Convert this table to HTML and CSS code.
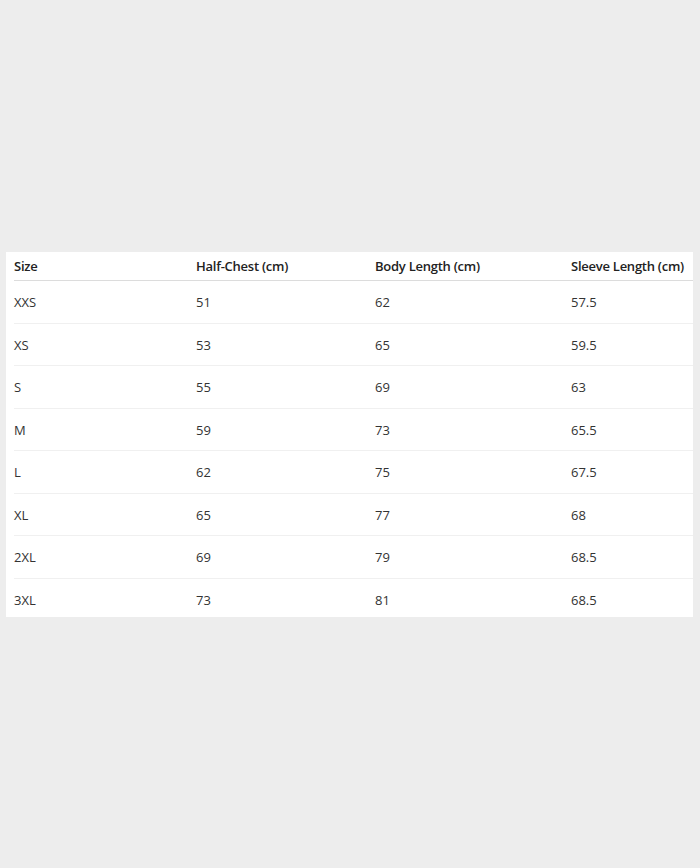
FILE: index.html
```html
<!DOCTYPE html>
<html>
<head>
<meta charset="utf-8">
<link rel="stylesheet" href="styles.css">
</head>
<body>
<div class="page">
  <div class="card">
    <div class="row head">
      <div>Size</div><div>Half-Chest (cm)</div><div>Body Length (cm)</div><div>Sleeve Length (cm)</div>
    </div>
    <div class="row"><div>XXS</div><div>51</div><div>62</div><div>57.5</div></div>
    <div class="row"><div>XS</div><div>53</div><div>65</div><div>59.5</div></div>
    <div class="row"><div>S</div><div>55</div><div>69</div><div>63</div></div>
    <div class="row"><div>M</div><div>59</div><div>73</div><div>65.5</div></div>
    <div class="row"><div>L</div><div>62</div><div>75</div><div>67.5</div></div>
    <div class="row"><div>XL</div><div>65</div><div>77</div><div>68</div></div>
    <div class="row"><div>2XL</div><div>69</div><div>79</div><div>68.5</div></div>
    <div class="row last"><div>3XL</div><div>73</div><div>81</div><div>68.5</div></div>
  </div>
</div>
</body>
</html>
```

FILE: styles.css
```css
html, body {
  margin: 0;
  padding: 0;
  background: #ededed;
}
.page {
  width: 700px;
  height: 868px;
  padding-top: 252px;
  padding-left: 6px;
  box-sizing: border-box;
}
.card {
  width: 687px;
  background: #ffffff;
  padding-left: 8px;
  box-sizing: border-box;
  font-family: "Open Sans", "Noto Sans", sans-serif;
  font-size: 13px;
  color: #333;
}
.row {
  display: grid;
  grid-template-columns: 182px 179px 196px 1fr;
  height: 42.5px;
  align-items: center;
  border-bottom: 1px solid #f0f0f0;
  box-sizing: border-box;
  padding-top: 1px;
}
.row.head {
  height: 29px;
  padding-top: 0;
  font-weight: 600;
  color: #222;
  letter-spacing: -0.25px;
  border-bottom: 1px solid #dcdcdc;
}
.row.last {
  height: 38px;
  border-bottom: none;
  padding-top: 4px;
}
.row > div {
  white-space: nowrap;
}
```
